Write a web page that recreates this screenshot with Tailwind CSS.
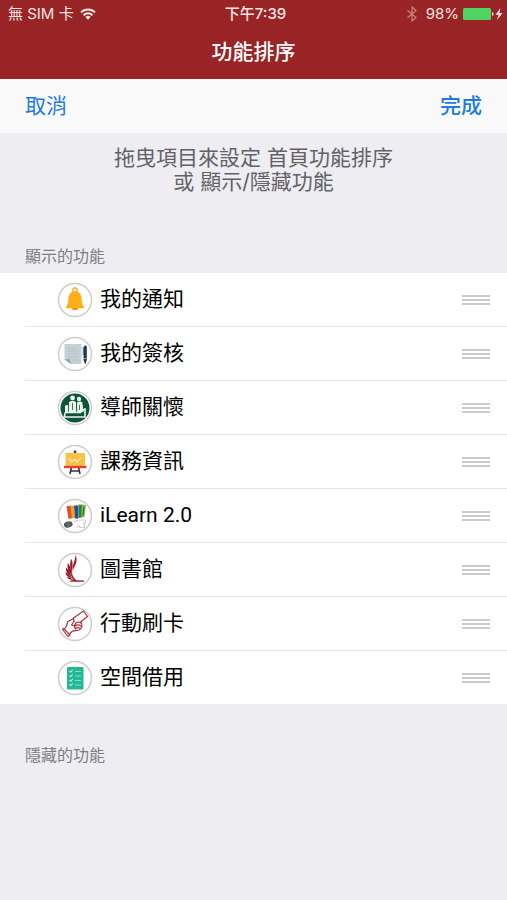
<!DOCTYPE html>
<html lang="zh-Hant">

<head>
    <meta charset="UTF-8">
    <meta name="viewport" content="width=device-width, initial-scale=1.0">
    <title>功能排序</title>
    <script src="https://cdn.jsdelivr.net/npm/@tailwindcss/browser@4"></script>
</head>

<body class="min-h-screen bg-[#eeedf2] font-['Inter','Noto_Sans_CJK_TC',sans-serif] text-black antialiased">
    <!-- Header -->
    <header class="bg-[#982426] text-white">
        <!-- Status bar -->
        <div class="grid grid-cols-3 items-center h-7 pl-2 pr-1 text-[15px] leading-7 text-[#f8e4e2]">
            <div class="flex items-center gap-1.5">
                <span class="whitespace-nowrap">無 SIM 卡</span>
                <svg class="w-4 h-3" viewBox="0 0 16 12" fill="none" stroke="currentColor" stroke-width="2">
                    <path d="M1 4.4a10 10 0 0 1 14 0M3.5 7.2a6.4 6.4 0 0 1 9 0" />
                    <path d="M8 11.8 5.4 9.1a3.7 3.7 0 0 1 5.2 0z" fill="currentColor" stroke="none" />
                </svg>
            </div>
            <p class="text-center font-medium leading-7">下午7:39</p>
            <div class="flex items-center justify-end gap-1">
                <svg class="w-3 h-4 mr-1 text-[#c98583]" viewBox="0 0 12 16" fill="none" stroke="currentColor" stroke-width="1.2">
                    <path d="M1.5 4.2 10 11.5 6 15V1l4 3.5-8.500 7.300" />
                </svg>
                <span>98%</span>
                <svg class="w-8 h-3" viewBox="0 0 32 12">
                    <rect x="0" y="0" width="28" height="12" rx="1.500" fill="#4fd463" />
                    <path d="M29 4c2 .5 2 3.500 0 4z" fill="#f3cfcd" />
                </svg>
                <svg class="w-2 h-3 -ml-1" viewBox="0 0 8 12" fill="currentColor">
                    <path d="M5.500 0 .5 6.800h3L2 12l5.500-7H4.400z" />
                </svg>
            </div>
        </div>
        <h1 class="h-[51px] pt-2 text-center text-[21px] leading-8 font-medium">功能排序</h1>
    </header>

    <!-- Toolbar -->
    <nav class="flex items-center justify-between h-[54px] px-[25px] bg-[#f9f9fa] text-[21px] text-[#1f7be0]">
        <button type="button">取消</button>
        <button type="button" class="font-medium">完成</button>
    </nav>

    <main>
        <p class="pt-[13px] text-center text-[21px] leading-6 text-[#626266]">拖曳項目來設定 首頁功能排序<br>或 顯示/隱藏功能</p>

        <!-- Visible functions -->
        <section class="pt-[50px]">
            <h2 class="px-[25px] pb-[5px] text-base leading-6 text-[#7d7d82]">顯示的功能</h2>
            <ul class="bg-white font-['Roboto','Noto_Sans_CJK_TC',sans-serif]">
                <li class="flex items-center pl-[57px] pr-[17px]">
                    <svg class="w-9 h-9 shrink-0" viewBox="0 0 36 36">
                        <circle cx="18" cy="18" r="16.500" fill="#fff" stroke="#cdcdcd" stroke-width="1.500" />
                        <circle cx="18" cy="8" r="2.200" fill="none" stroke="#f9a814" stroke-width="1.300" />
                        <path d="M18 9.500c-5 0-6.500 3.500-6.700 8-.2 4-1 6.500-3 8.700h19.400c-2-2.200-2.800-4.700-3-8.700-.2-4.500-1.700-8-6.700-8z" fill="#fcaf16" />
                        <path d="M15 26h6a3 2.200 0 0 1-6 0z" fill="#ef920e" />
                    </svg>
                    <span class="ml-[7px] grow text-[21px] leading-[53px]">我的通知</span>
                    <button type="button" aria-label="拖曳 我的通知" class="flex flex-col gap-0.5 w-7">
                        <span class="h-0.5 bg-[#cbcbcd]"></span><span class="h-0.5 bg-[#cbcbcd]"></span><span class="h-0.5 bg-[#cbcbcd]"></span>
                    </button>
                </li>
                <li class="ml-[25px] border-t border-[#e6e6e8] flex items-center pl-8 pr-[17px]">
                    <svg class="w-9 h-9 shrink-0" viewBox="0 0 36 36">
                        <circle cx="18" cy="18" r="16.500" fill="#fff" stroke="#cdcdcd" stroke-width="1.500" />
                        <path d="M7.500 8h17v20H14l-6.500-4.500z" fill="#c5d0d4" />
                        <path d="m7.500 23.500 5-.5 1.500 5z" fill="#93a2aa" />
                        <path d="M10.500 12h8M10.500 15h11M10.500 18h11M10.500 21h11M14.500 24h7" stroke="#b1bdc2" stroke-width=".8" />
                        <path d="M27 10.500c.8-1.500 2.800-1 2.800.8V24l-1.600 4.500L26.500 24z" fill="#1c3c50" />
                        <path d="M26.300 11v8" stroke="#1c3c50" stroke-width=".8" />
                        <path d="M26.600 22.500h3.200" stroke="#b09256" />
                    </svg>
                    <span class="ml-[7px] grow text-[21px] leading-[53px]">我的簽核</span>
                    <button type="button" aria-label="拖曳 我的簽核" class="flex flex-col gap-0.5 w-7">
                        <span class="h-0.5 bg-[#cbcbcd]"></span><span class="h-0.5 bg-[#cbcbcd]"></span><span class="h-0.5 bg-[#cbcbcd]"></span>
                    </button>
                </li>
                <li class="ml-[25px] border-t border-[#e6e6e8] flex items-center pl-8 pr-[17px]">
                    <svg class="w-9 h-9 shrink-0" viewBox="0 0 36 36">
                        <circle cx="18" cy="18" r="16.500" fill="#fff" stroke="#cdcdcd" stroke-width="1.500" />
                        <circle cx="18" cy="18" r="14.500" fill="#0e5538" />
                        <g fill="#edf4ef">
                            <circle cx="15.500" cy="8" r="2.400" />
                            <circle cx="22" cy="9" r="2.200" />
                            <path d="M12 12c1-1.500 6-1.500 7 0l.2 10h-7.400z" />
                            <path d="M20 12.500c1-1.200 4.500-1.200 5.300 0l1.200 9.500h-6.300z" />
                            <path d="M8 15.500 11 15v7l-3 1z" />
                        </g>
                        <path d="M8 22.500h15.500l4.500-4M8 22.500l-.5 4.500H28v-9" fill="none" stroke="#edf4ef" stroke-width="1.600" />
                        <path d="M15.500 13v7M22.500 15v5" stroke="#0e5538" stroke-width=".8" />
                    </svg>
                    <span class="ml-[7px] grow text-[21px] leading-[53px]">導師關懷</span>
                    <button type="button" aria-label="拖曳 導師關懷" class="flex flex-col gap-0.5 w-7">
                        <span class="h-0.5 bg-[#cbcbcd]"></span><span class="h-0.5 bg-[#cbcbcd]"></span><span class="h-0.5 bg-[#cbcbcd]"></span>
                    </button>
                </li>
                <li class="ml-[25px] border-t border-[#e6e6e8] flex items-center pl-8 pr-[17px]">
                    <svg class="w-9 h-9 shrink-0" viewBox="0 0 36 36">
                        <circle cx="18" cy="18" r="16.500" fill="#fff" stroke="#cdcdcd" stroke-width="1.500" />
                        <path d="M14.500 23l-1.500 7M21.500 23l1.500 7M13.500 27h9" fill="none" stroke="#33333b" stroke-width="1.600" />
                        <path d="M16.800 6.500h2.500v3h-2.500z" fill="#4c4034" />
                        <path d="M8.500 9h19.500v13.500H8.500z" fill="#f7c146" />
                        <path d="M11.500 16.500q1.500-3 2.500 0t2.500 0 2.500 0 2.500 0 3-2" fill="none" stroke="#fff0b9" stroke-width="1.200" />
                        <path d="M7 21.800h22.500v2.400H7z" fill="#e04130" />
                    </svg>
                    <span class="ml-[7px] grow text-[21px] leading-[53px]">課務資訊</span>
                    <button type="button" aria-label="拖曳 課務資訊" class="flex flex-col gap-0.5 w-7">
                        <span class="h-0.5 bg-[#cbcbcd]"></span><span class="h-0.5 bg-[#cbcbcd]"></span><span class="h-0.5 bg-[#cbcbcd]"></span>
                    </button>
                </li>
                <li class="ml-[25px] border-t border-[#e6e6e8] flex items-center pl-8 pr-[17px]">
                    <svg class="w-9 h-9 shrink-0" viewBox="0 0 36 36">
                        <circle cx="18" cy="18" r="16.500" fill="#fff" stroke="#cdcdcd" stroke-width="1.500" />
                        <path d="m9.500 8.500 4.500-1 1.500 12.500-4 1z" fill="#e0512a" />
                        <path d="m13.500 8 3.500-.5 1 12.500-3 .5z" fill="#f0a11f" />
                        <path d="m17 7.500 4.500 0v13h-3.500z" fill="#294f94" />
                        <path d="m21.500 6.500 3.500 0v13l-3.500 .5z" fill="#3c9c48" />
                        <path d="m25 6.500 4 .5-1.500 12-3 .5z" fill="#86b83c" />
                        <path d="M19.500 9v10M23 8v11M27 8.500l-1 9" stroke="#274b5e" stroke-width=".8" />
                        <path d="M16 22.500c1.500 2.500 4-.5 7-.5h5.500v3c-2-1-3 1-1 2v2.500h-5c1-2-2-2.500-2 0" fill="none" stroke="#d0d0d0" stroke-width="1.200" />
                        <ellipse cx="11.300" cy="26.500" rx="4.400" ry="3" fill="#50565a" transform="rotate(-12 11.300 26.500)" />
                        <path d="M8.500 25.500l5.500 2M12 24l-1 5" stroke="#777d80" stroke-width=".6" />
                    </svg>
                    <span class="ml-[7px] grow text-[21px] leading-[53px]">iLearn 2.0</span>
                    <button type="button" aria-label="拖曳 iLearn 2.0" class="flex flex-col gap-0.5 w-7">
                        <span class="h-0.5 bg-[#cbcbcd]"></span><span class="h-0.5 bg-[#cbcbcd]"></span><span class="h-0.5 bg-[#cbcbcd]"></span>
                    </button>
                </li>
                <li class="ml-[25px] border-t border-[#e6e6e8] flex items-center pl-8 pr-[17px]">
                    <svg class="w-9 h-9 shrink-0" viewBox="0 0 36 36">
                        <circle cx="18" cy="18" r="16.500" fill="#fff" stroke="#cdcdcd" stroke-width="1.500" />
                        <g fill="#9b1c26">
                            <path d="M18.500 3c2.500 5 .5 9-2.500 15C15 13 18.500 8.500 18.500 3z" />
                            <path d="M14 6.500c2.500 4.500 1.500 8 1.200 13.500-3-4-2.200-8.500-1.200-13.500z" />
                            <path d="M10.800 11c3 3.500 3 7 4 11.500-4-3-4.800-7-4-11.500z" />
                            <path d="M9 15.500c3 2.500 4 5.500 6 8.800-4.500-1.500-6.500-4.800-6-8.800z" />
                            <path d="M8.500 20c2.500 1.500 4.500 3.800 7 6-4-.2-7-2.200-7-6z" />
                            <path d="M10 25c2.500.2 4.500 1.300 6.500 2.500-3 .8-5.500-.2-6.500-2.500z" />
                            <path d="M15 17c-.4 5 .8 8.500 4.500 11.200l7.500.3v1.300H13v-1l3.500-.8c-2.700-3-3-7-1.500-11z" />
                        </g>
                    </svg>
                    <span class="ml-[7px] grow text-[21px] leading-[53px]">圖書館</span>
                    <button type="button" aria-label="拖曳 圖書館" class="flex flex-col gap-0.5 w-7">
                        <span class="h-0.5 bg-[#cbcbcd]"></span><span class="h-0.5 bg-[#cbcbcd]"></span><span class="h-0.5 bg-[#cbcbcd]"></span>
                    </button>
                </li>
                <li class="ml-[25px] border-t border-[#e6e6e8] flex items-center pl-8 pr-[17px]">
                    <svg class="w-9 h-9 shrink-0" viewBox="0 0 36 36">
                        <circle cx="18" cy="18" r="16.500" fill="#fff" stroke="#cdcdcd" stroke-width="1.500" />
                        <g fill="none" stroke="#ad3038" stroke-width="1.200" stroke-linejoin="round" stroke-linecap="round">
                            <path d="M17 15.500 16.500 12 26.500 5l4 5.500-7 5.500" />
                            <path d="M16.500 12.500 11 15.500 9 21l-1.500 2" />
                            <path d="M17 15.500l-2.500 3.500 3 1" />
                            <path d="M24 16.500c2 2.500 1 6-2 7.500-3 1-5 0-7 1.500L12.500 28" />
                            <path d="m6.500 22.500-1 1 5.500 7 2-1.500z" />
                            <path d="M18.500 17.500c1.500-1.500 4-1.500 5.500-.5M18 20c2-1.500 4-1.500 6 0M18.500 22.500c1.500-1.200 3-1 4.500-.3M18.500 17.500c-1 1.500-1 4 0 5.500" />
                        </g>
                    </svg>
                    <span class="ml-[7px] grow text-[21px] leading-[53px]">行動刷卡</span>
                    <button type="button" aria-label="拖曳 行動刷卡" class="flex flex-col gap-0.5 w-7">
                        <span class="h-0.5 bg-[#cbcbcd]"></span><span class="h-0.5 bg-[#cbcbcd]"></span><span class="h-0.5 bg-[#cbcbcd]"></span>
                    </button>
                </li>
                <li class="ml-[25px] border-t border-[#e6e6e8] flex items-center pl-8 pr-[17px]">
                    <svg class="w-9 h-9 shrink-0" viewBox="0 0 36 36">
                        <circle cx="18" cy="18" r="16.500" fill="#fff" stroke="#cdcdcd" stroke-width="1.500" />
                        <rect x="10" y="7" width="16.500" height="22.500" rx="1" fill="#22b795" />
                        <path d="M18 11.500h6M18 16h6M18 20.500h6M18 25h6" stroke="#8adcc8" stroke-width="1.200" />
                        <path d="m12.500 11 1.200 1.200 2-2.400M12.500 15.500l1.200 1.200 2-2.400M12.500 20l1.200 1.200 2-2.400M12.500 24.500l1.200 1.200 2-2.400" fill="none" stroke="#b5eadd" stroke-width="1.200" />
                    </svg>
                    <span class="ml-[7px] grow text-[21px] leading-[53px]">空間借用</span>
                    <button type="button" aria-label="拖曳 空間借用" class="flex flex-col gap-0.5 w-7">
                        <span class="h-0.5 bg-[#cbcbcd]"></span><span class="h-0.5 bg-[#cbcbcd]"></span><span class="h-0.5 bg-[#cbcbcd]"></span>
                    </button>
                </li>
            </ul>
        </section>

        <!-- Hidden functions -->
        <section class="pt-[39px]">
            <h2 class="px-[25px] text-base leading-6 text-[#7d7d82]">隱藏的功能</h2>
        </section>
    </main>
</body>

</html>
